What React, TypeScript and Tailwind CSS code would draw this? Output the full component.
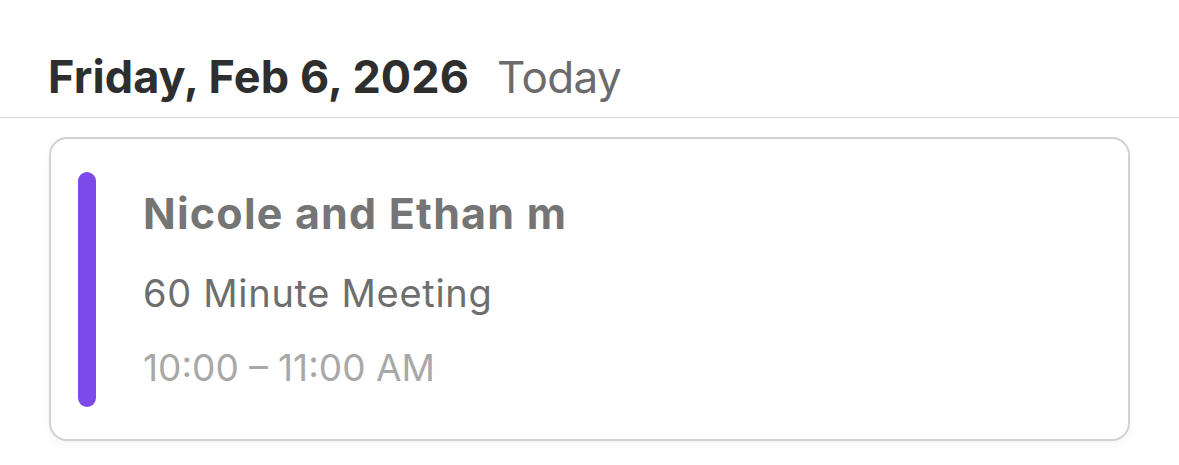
import * as React from "react";

export default function App() {
  return (
    <div className="min-h-[465px] w-full bg-white pt-[50px] font-['Inter','Noto_Sans',sans-serif]">
      <div className="flex items-baseline gap-[28px] px-[48px] pb-[13px]">
        <h1 className="text-[45px] font-bold leading-[54px] tracking-[0.1px] text-[#2e2e2e]">Friday, Feb 6, 2026</h1>
        <span className="text-[44px] leading-[54px] tracking-[-0.6px] text-[#6b6b6b]">Today</span>
      </div>
      <div className="h-px w-full bg-[#d6d6d6]" />
      <div className="px-[49px] pt-[19px]">
        <div className="flex h-[304px] rounded-[18px] border-2 border-[#d2d2d2] bg-white pl-[27px] pt-[33px] shadow-[0_4px_10px_rgba(0,0,0,0.04)]">
          <div className="h-[235px] w-[18px] rounded-full bg-[#7b4ae8]" />
          <div className="flex flex-col pl-[47px] pt-[14px]">
            <div className="text-[43px] font-bold leading-[54px] tracking-[1.2px] text-[#757575]">Nicole and Ethan m</div>
            <div className="mt-[26px] text-[38px] leading-[54px] tracking-[0.7px] text-[#6e6e6e]">60 Minute Meeting</div>
            <div className="mt-[21px] text-[37px] leading-[54px] tracking-[0px] text-[#a8a8a8]">10:00 – 11:00 AM</div>
          </div>
        </div>
      </div>
    </div>
  );
}
